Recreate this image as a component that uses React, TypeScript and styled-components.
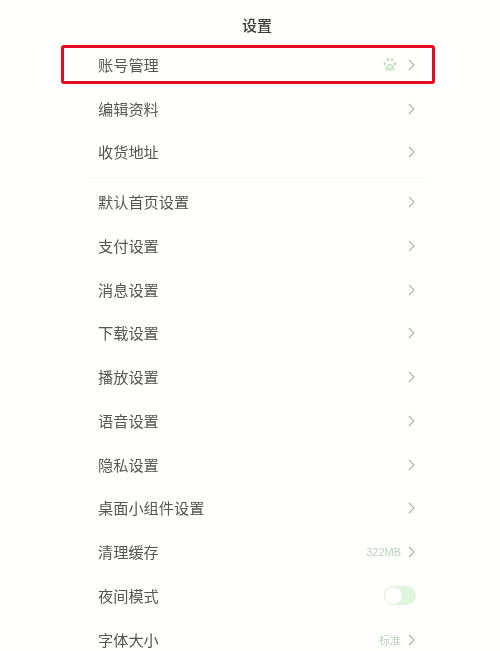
import styled, { createGlobalStyle } from "styled-components";

const GlobalStyle = createGlobalStyle`
  html, body {
    margin: 0;
    padding: 0;
    background: #fffffd;
  }
`;

const Page = styled.div`
  width: 500px;
  height: 651px;
  overflow: hidden;
  background: #fffffd;
  font-family: "Liberation Sans", "Noto Sans CJK SC", sans-serif;
  filter: blur(0.3px);
`;

const Header = styled.header`
  height: 43px;
  padding: 5px 0 0 14px;
  box-sizing: border-box;
  display: flex;
  align-items: center;
  justify-content: center;
  font-size: 15px;
  font-weight: 500;
  color: #3a3a3a;
`;

const Group = styled.div`
  margin-left: 61px;
  width: 374px;
`;

const Divider = styled.div`
  height: 1px;
  margin: 3px 5px 2px 24px;
  background: #fbfbf3;
`;

const Row = styled.div<{ $marked?: boolean }>`
  position: relative;
  height: 43.75px;
  padding: 0 20px 0 37px;
  box-sizing: border-box;
  display: flex;
  align-items: center;
  justify-content: space-between;

  ${(p) =>
    p.$marked &&
    `
    &::after {
      content: "";
      position: absolute;
      left: 0;
      right: 0;
      top: 2px;
      height: 38.5px;
      box-sizing: border-box;
      border: 3.5px solid #e60a22;
      border-radius: 3px;
    }
  `}
`;

const Label = styled.span`
  font-size: 15.2px;
  margin-bottom: 2px;
  color: #555552;
`;

const Extra = styled.div<{ $gap?: number }>`
  display: flex;
  align-items: center;
  gap: ${(p) => p.$gap ?? 7}px;
`;

const Note = styled.span`
  font-size: 11px;
  color: #bdd2ba;
`;

const Switch = styled.div`
  position: relative;
  width: 32px;
  height: 19px;
  margin-right: -1px;
  border-radius: 10px;
  background: #dff5dc;
`;

const Knob = styled.div`
  position: absolute;
  left: 0;
  top: 0;
  width: 19px;
  height: 19px;
  box-sizing: border-box;
  border-radius: 50%;
  background: #fff;
  border: 1px solid #e4ecdf;
`;

const Chevron = () => (
  <svg width="7" height="12" viewBox="0 0 7 12" fill="none">
    <path d="M1 1l5 5-5 5" stroke="#b0b0ad" strokeWidth="1.1" />
  </svg>
);

const Paw = () => (
  <svg width="14" height="15" viewBox="0 0 14 15" fill="#bfe0b6">
    <ellipse cx="1.8" cy="6.6" rx="1.3" ry="1.6" />
    <ellipse cx="12.2" cy="6.6" rx="1.3" ry="1.6" />
    <ellipse cx="5" cy="2.8" rx="1.3" ry="1.7" />
    <ellipse cx="9" cy="2.8" rx="1.3" ry="1.7" />
    <path
      d="M7 7.2c1.5 0 2.1 1.1 2.9 2.1.9 1.1 1.1 1.9.7 2.6-.5.9-2 .7-3.6.7s-3.1.2-3.6-.7c-.4-.7-.2-1.5.7-2.6.8-1 1.4-2.1 2.9-2.1z"
      fill="#e3f2de"
      stroke="#bcdcb3"
      strokeWidth="1.1"
    />
  </svg>
);

const firstGroup = ["编辑资料", "收货地址"];
const secondGroup = [
  "默认首页设置",
  "支付设置",
  "消息设置",
  "下载设置",
  "播放设置",
  "语音设置",
  "隐私设置",
  "桌面小组件设置",
];

export default function App() {
  return (
    <Page>
      <GlobalStyle />
      <Header>设置</Header>
      <Group>
        <Row $marked>
          <Label>账号管理</Label>
          <Extra $gap={11}>
            <Paw />
            <Chevron />
          </Extra>
        </Row>
        {firstGroup.map((name) => (
          <Row key={name}>
            <Label>{name}</Label>
            <Chevron />
          </Row>
        ))}
        <Divider />
        {secondGroup.map((name) => (
          <Row key={name}>
            <Label>{name}</Label>
            <Chevron />
          </Row>
        ))}
        <Row>
          <Label>清理缓存</Label>
          <Extra>
            <Note>322MB</Note>
            <Chevron />
          </Extra>
        </Row>
        <Row>
          <Label>夜间模式</Label>
          <Switch>
            <Knob />
          </Switch>
        </Row>
        <Row>
          <Label>字体大小</Label>
          <Extra>
            <Note>标准</Note>
            <Chevron />
          </Extra>
        </Row>
      </Group>
    </Page>
  );
}
